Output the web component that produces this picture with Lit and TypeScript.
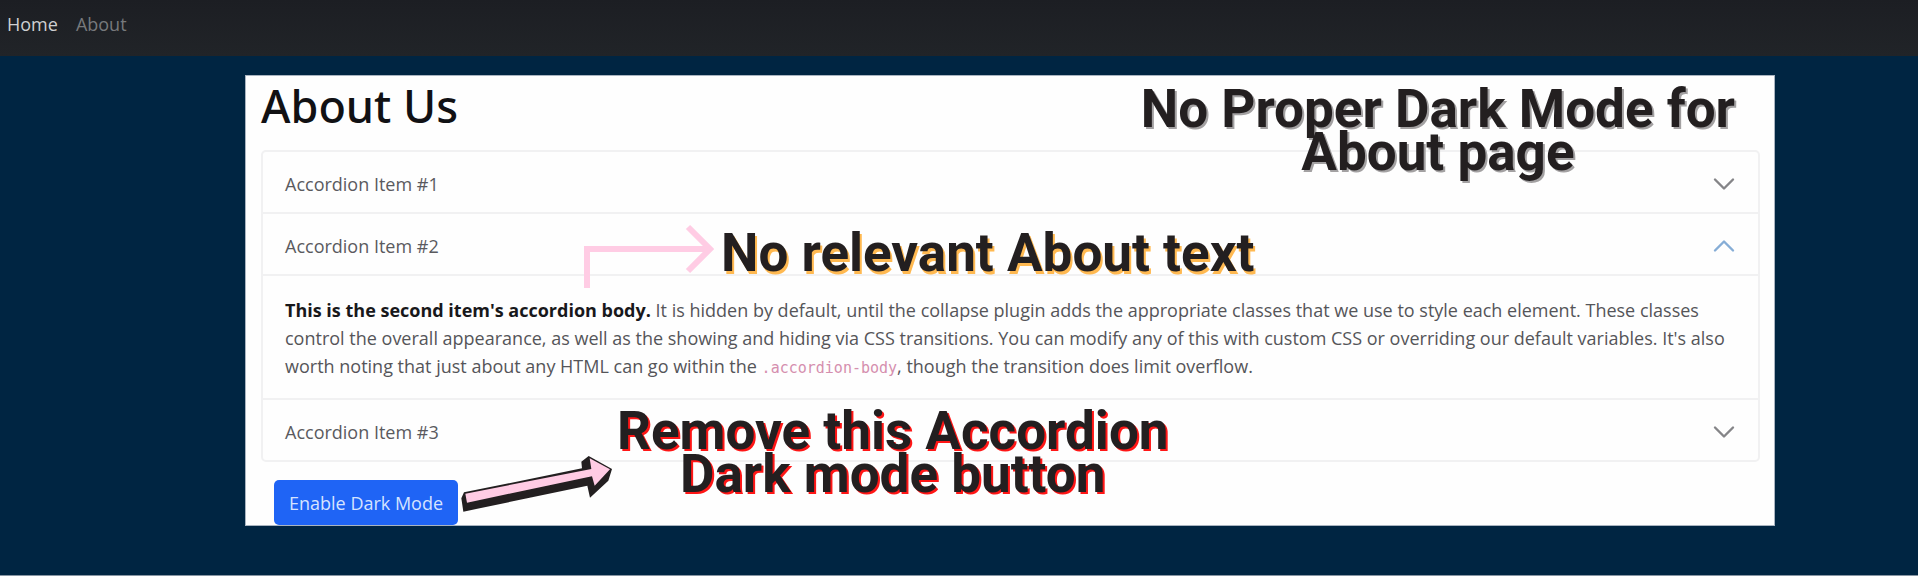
import { LitElement, html, css, svg } from "lit";
import { customElement, state } from "lit/decorators.js";
import { classMap } from "lit/directives/class-map.js";

interface Item {
  title: string;
  body: unknown;
}

const placeholder = html`Placeholder content for this item.`;

const items: Item[] = [
  { title: "Accordion Item #1", body: placeholder },
  {
    title: "Accordion Item #2",
    body: html`<strong>This is the second item's accordion body.</strong> It is
      hidden by default, until the collapse plugin adds the appropriate classes
      that we use to style each element. These classes control the overall
      appearance, as well as the showing and hiding via CSS transitions. You can
      modify any of this with custom CSS or overriding our default variables.
      It's also worth noting that just about any HTML can go within the
      <code>.accordion-body</code>, though the transition does limit overflow.`,
  },
  { title: "Accordion Item #3", body: placeholder },
];

const chevron = svg`<path d="M2 5l6 6 6-6" fill="none" stroke="currentColor" stroke-width="1.6" stroke-linecap="round" stroke-linejoin="round" />`;

@customElement("about-accordion")
export class AboutAccordion extends LitElement {
  static styles = css`
    :host {
      display: block;
      border: 2px solid #f1f1f2;
      border-radius: 5px;
    }
    .item + .item {
      border-top: 2px solid #f1f1f2;
    }
    .title {
      margin: 0;
      font: inherit;
    }
    .toggle {
      display: flex;
      align-items: center;
      justify-content: space-between;
      width: 100%;
      height: 60px;
      padding: 3px 22px 0;
      border: 0;
      background: none;
      color: #5a5a5e;
      font: inherit;
      text-align: left;
      cursor: pointer;
    }
    .chevron {
      width: 24px;
      height: 24px;
      color: #858588;
    }
    .open .chevron {
      color: #86add6;
      transform: rotate(180deg);
    }
    .body {
      border-top: 2px solid #f1f1f2;
      padding: 20px 22px 18px;
      color: #555559;
    }
    strong {
      color: #18181b;
    }
    code {
      color: #d58fae;
      font-family: "DejaVu Sans Mono", monospace;
      font-size: 15px;
      line-height: 20px;
    }
  `;

  @state() private open = 1;

  render() {
    return items.map(
      (item, i) => html`
        <div class=${classMap({ item: true, open: this.open === i })}>
          <h2 class="title">
            <button
              class="toggle"
              aria-expanded=${this.open === i}
              @click=${() => (this.open = this.open === i ? -1 : i)}
            >
              ${item.title}
              <svg class="chevron" viewBox="0 0 16 16" aria-hidden="true">${chevron}</svg>
            </button>
          </h2>
          ${this.open === i ? html`<div class="body">${item.body}</div>` : ""}
        </div>
      `
    );
  }
}

@customElement("app-root")
export class AppRoot extends LitElement {
  static styles = css`
    :host {
      display: block;
      box-sizing: border-box;
      min-height: 100vh;
      background: #002542;
      border-bottom: 1px solid #8795a3;
      font-family: "Open Sans", "Noto Sans", sans-serif;
      font-size: 18px;
      line-height: 28px;
    }
    .nav {
      display: flex;
      gap: 18px;
      height: 56px;
      box-sizing: border-box;
      padding: 10px 7px;
      background: linear-gradient(#1c1e23, #212428);
    }
    .link {
      color: #77797c;
      text-decoration: none;
    }
    .active {
      color: #cfd0d1;
      font-weight: 500;
    }
    .card {
      position: relative;
      margin: 19px 143px 0 245px;
      padding: 0 14px 0 15px;
      border: 1px solid #a9b4c0;
      background: #fefefe;
    }
    .heading {
      margin: 0;
      padding: 2px 0 16px;
      color: #111114;
      font-family: "Noto Sans", "Open Sans", sans-serif;
      font-size: 45px;
      font-weight: 500;
      line-height: 56px;
    }
    .mode {
      display: block;
      margin: 18px 0 0 13px;
      height: 45px;
      padding: 0 15px;
      border: 0;
      border-radius: 5px;
      background: #1f64f5;
      color: #d5e3ff;
      font: inherit;
      cursor: pointer;
    }
    .note {
      position: absolute;
      margin: 0;
      color: #231f20;
      font-family: Roboto, sans-serif;
      font-size: 53px;
      font-weight: 700;
      line-height: 43px;
      text-align: center;
      white-space: nowrap;
    }
    .note-page {
      top: 12px;
      right: 39px;
      text-shadow: 2px 2px #a3a1a2;
    }
    .note-text {
      top: 156px;
      left: 475px;
      text-shadow: 2px 3px #ffb951;
    }
    .note-button {
      top: 334px;
      left: 371px;
      text-shadow: 2px 2px #ff1616;
    }
    .arrow {
      position: absolute;
    }
    .arrow-text {
      top: 148px;
      left: 335px;
    }
    .arrow-button {
      top: 379px;
      left: 214px;
    }
  `;

  render() {
    return html`
      <nav class="nav">
        <a class="link active" href="#home">Home</a>
        <a class="link" href="#about">About</a>
      </nav>
      <main class="card">
        <h1 class="heading">About Us</h1>
        <about-accordion></about-accordion>
        <button class="mode">Enable Dark Mode</button>

        <p class="note note-page">No Proper Dark Mode for<br />About page</p>
        <svg class="arrow arrow-text" width="136" height="66" viewBox="0 0 136 66" aria-hidden="true">
          <g fill="none" stroke="#ffcce4" stroke-width="6">
            <path d="M6 64V25H127" />
            <path d="M107 3L129 25L107 47" />
          </g>
        </svg>
        <p class="note note-text">No relevant About text</p>
        <svg class="arrow arrow-button" width="154" height="58" viewBox="660 228 462 174" aria-hidden="true">
          <path fill="#231f20" d="M664 358L672 340L1026 268L1024 248L1046 231L1116 270L1105 305L1050 356L1042 320L670 398Z" />
          <path fill="#ffcce4" d="M676 344L1054 270L1049 238L1110 271L1064 320L1056 292L681 371Z" />
        </svg>
        <p class="note note-button">Remove this Accordion<br />Dark mode button</p>
      </main>
    `;
  }
}
